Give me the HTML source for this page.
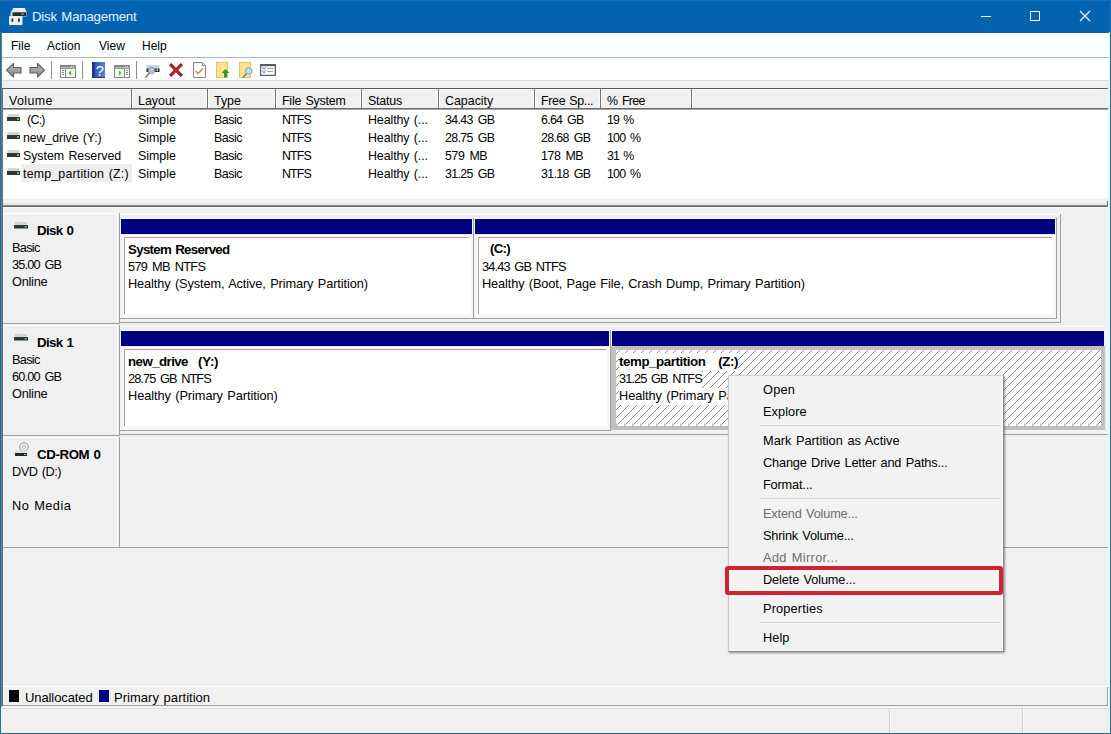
<!DOCTYPE html>
<html><head><meta charset="utf-8">
<style>
*{margin:0;padding:0;box-sizing:border-box}
html,body{width:1111px;height:734px;overflow:hidden;background:#f0f0f0}
body{font-family:"Liberation Sans",sans-serif;font-size:12px;color:#000;position:relative}
.a{position:absolute}
.t{position:absolute;white-space:nowrap}
svg{display:block}
</style></head>
<body>
<div class="a" style="left:0px;top:0px;width:1111px;height:734px;background:#f0f0f0;"></div>
<div class="a" style="left:0px;top:0px;width:1111px;height:32px;background:#0463b1;"></div>
<div class="a" style="left:0px;top:32px;width:1111px;height:1px;background:#1f5d86;"></div>
<div class="a" style="left:0px;top:0px;width:1111px;height:1px;background:#1670bb;"></div>
<div class="a" style="left:1110px;top:0px;width:1px;height:32px;background:#1670bb;"></div>
<svg class="a" style="left:4px;top:4px" width="28" height="26" viewBox="0 0 28 26">
<defs><linearGradient id="tg" x1="0" y1="0" x2="0" y2="1"><stop offset="0" stop-color="#f4f6fa"/><stop offset="1" stop-color="#c9d3dc"/></linearGradient></defs>
<path d="M9.3,4 L20.7,4 L23,9 L23,12.5 L6.5,12.5 L6.5,9 Z" fill="url(#tg)"/>
<rect x="8.5" y="8.3" width="14" height="3.7" fill="#23302a"/>
<rect x="17" y="9.5" width="3" height="1.2" fill="#6fb27a"/>
<rect x="5" y="12" width="13.5" height="9" rx="1" fill="#e9f1f8"/>
<rect x="7.5" y="14.5" width="1.8" height="3.3" fill="#2c3033"/>
<rect x="14" y="14.5" width="1.8" height="3.3" fill="#2c3033"/>
</svg>
<div class="t" style="left:32px;top:9.43px;font-size:13.2px;line-height:16px;letter-spacing:-0.186px;word-spacing:1.0px;color:#e4f4ff;">Disk Management</div>
<div class="a" style="left:981px;top:16px;width:10px;height:1px;background:#fff;"></div>
<div class="a" style="left:1030px;top:11px;width:10px;height:10px;border:1px solid #fff"></div>
<svg class="a" style="left:1079px;top:10px" width="12" height="12" viewBox="0 0 12 12"><path d="M1,1 L11,11 M11,1 L1,11" stroke="#fff" stroke-width="1.1"/></svg>
<div class="a" style="left:0px;top:32px;width:1px;height:702px;background:#2d6e85;"></div>
<div class="a" style="left:1110px;top:32px;width:1px;height:702px;background:#2d6e85;"></div>
<div class="a" style="left:0px;top:733px;width:1111px;height:1px;background:#2d6e85;"></div>
<div class="a" style="left:1px;top:33px;width:1109px;height:24px;background:#fbfeff;"></div>
<div class="a" style="left:1px;top:57px;width:1109px;height:1px;background:#b4b4b4;"></div>
<div class="t" style="left:11px;top:39.34px;font-size:12px;line-height:15px;color:#000;">File</div>
<div class="t" style="left:47px;top:39.34px;font-size:12px;line-height:15px;color:#000;">Action</div>
<div class="t" style="left:99px;top:39.34px;font-size:12px;line-height:15px;color:#000;">View</div>
<div class="t" style="left:142px;top:39.34px;font-size:12px;line-height:15px;color:#000;">Help</div>
<div class="a" style="left:1px;top:58px;width:1109px;height:22px;background:#fff;"></div>
<svg class="a" style="left:5px;top:62px" width="18" height="17" viewBox="0 0 18 17"><defs><linearGradient id="ag" x1="0" y1="0" x2="0" y2="1"><stop offset="0" stop-color="#b8b8b8"/><stop offset="1" stop-color="#8a8a8a"/></linearGradient></defs><path d="M1.5,8.2 L8.5,1.5 L8.5,5.5 L16,5.5 L16,11 L8.5,11 L8.5,15 Z" fill="url(#ag)" stroke="#5e5e5e" stroke-width="1.1" stroke-linejoin="round"/></svg>
<svg class="a" style="left:28px;top:62px" width="18" height="17" viewBox="0 0 18 17"><path d="M16.5,8.2 L9.5,1.5 L9.5,5.5 L2,5.5 L2,11 L9.5,11 L9.5,15 Z" fill="url(#ag)" stroke="#5e5e5e" stroke-width="1.1" stroke-linejoin="round"/></svg>
<div class="a" style="left:51px;top:61px;width:1px;height:18px;background:#8c8c8c;"></div>
<div class="a" style="left:82px;top:61px;width:1px;height:18px;background:#8c8c8c;"></div>
<div class="a" style="left:136px;top:61px;width:1px;height:18px;background:#8c8c8c;"></div>
<svg class="a" style="left:60px;top:65px" width="16" height="13" viewBox="0 0 16 13"><rect x="0.5" y="0.5" width="15" height="12" fill="#fff" stroke="#858585"/><rect x="1" y="1" width="14" height="1.6" fill="#8a8a8a"/><rect x="11" y="1.3" width="1" height="1" fill="#fff"/><rect x="13" y="1.3" width="1" height="1" fill="#fff"/><line x1="1" y1="3.5" x2="15" y2="3.5" stroke="#9a9a9a"/><line x1="5.5" y1="4" x2="5.5" y2="12" stroke="#858585"/><rect x="6" y="4" width="9" height="8" fill="#eef7ea"/><path d="M8.5,8 L11,5.5 L11,10.5 Z" fill="#58a848"/><rect x="2" y="5" width="2" height="1" fill="#858585"/><rect x="2" y="7" width="2" height="1" fill="#858585"/><rect x="2" y="9" width="2" height="1" fill="#858585"/></svg>
<svg class="a" style="left:114px;top:65px" width="16" height="13" viewBox="0 0 16 13"><rect x="0.5" y="0.5" width="15" height="12" fill="#fff" stroke="#858585"/><rect x="1" y="1" width="14" height="1.6" fill="#8a8a8a"/><rect x="11" y="1.3" width="1" height="1" fill="#fff"/><rect x="13" y="1.3" width="1" height="1" fill="#fff"/><line x1="1" y1="3.5" x2="15" y2="3.5" stroke="#9a9a9a"/><line x1="10.5" y1="4" x2="10.5" y2="12" stroke="#858585"/><rect x="1" y="4" width="9" height="8" fill="#eef7ea"/><path d="M7.5,8 L5,5.5 L5,10.5 Z" fill="#58a848"/><rect x="12" y="5" width="2" height="1" fill="#858585"/><rect x="12" y="7" width="2" height="1" fill="#858585"/><rect x="12" y="9" width="2" height="1" fill="#858585"/></svg>
<svg class="a" style="left:92px;top:62px" width="13" height="16" viewBox="0 0 13 16"><defs><linearGradient id="hg" x1="0" y1="0" x2="1" y2="0"><stop offset="0" stop-color="#3050b0"/><stop offset="1" stop-color="#5b7fd0"/></linearGradient></defs><rect x="0" y="0" width="13" height="16" fill="url(#hg)"/><rect x="0" y="0" width="3" height="16" fill="#1f3590"/><rect x="0" y="15" width="13" height="1" fill="#1f3590"/><text x="7.7" y="13.5" font-family="Liberation Sans" font-size="14.5" fill="#fff" text-anchor="middle">?</text></svg>
<svg class="a" style="left:144px;top:64px" width="17" height="15" viewBox="0 0 17 15"><rect x="2.5" y="1" width="13" height="3.5" fill="#cfd5da"/><rect x="2.5" y="4.5" width="13" height="3.5" fill="#1f2d25"/><path d="M11.5,6.2 L14,6.2 M13,5.3 L14,6.2 L13,7.1" stroke="#e0f0e0" stroke-width="0.8" fill="none"/><circle cx="7.5" cy="6.5" r="3.3" fill="#b4c4d2" stroke="#7a8a98" stroke-width="0.7"/><line x1="5.3" y1="9" x2="1.5" y2="13.5" stroke="#6a6a6a" stroke-width="1.3"/></svg>
<svg class="a" style="left:168px;top:62px" width="16" height="16" viewBox="0 0 16 16"><path d="M3.2,3.2 L12.8,12.8 M12.8,3.2 L3.2,12.8" stroke="#941820" stroke-width="3.1" stroke-linecap="square"/><path d="M3.8,3.8 L12.2,12.2 M12.2,3.8 L3.8,12.2" stroke="#c81e2a" stroke-width="1.6"/><circle cx="8" cy="8" r="1.3" fill="#e8202c"/></svg>
<svg class="a" style="left:193px;top:62px" width="14" height="16" viewBox="0 0 14 16"><path d="M0.5,0.5 L9.5,0.5 L12.5,3.5 L12.5,15.5 L0.5,15.5 Z" fill="#fbfdff" stroke="#858585"/><path d="M9.5,0.5 L9.5,3.5 L12.5,3.5" fill="#e6e6e6" stroke="#858585"/><path d="M2.5,9 L5,11.5 L10,6.5" fill="none" stroke="#d87a52" stroke-width="1.4"/></svg>
<svg class="a" style="left:216px;top:62px" width="14" height="16" viewBox="0 0 14 16"><rect x="0.5" y="0.5" width="11" height="15" fill="#fde38f" stroke="#e3c66a"/><path d="M9.5,7 L13.5,11 L11,11 L11,15.5 L8,15.5 L8,11 L5.5,11 Z" fill="#2f9a2a"/></svg>
<svg class="a" style="left:239px;top:62px" width="15" height="16" viewBox="0 0 15 16"><rect x="0.5" y="0.5" width="11" height="15" fill="#fde38f" stroke="#e3c66a"/><circle cx="9.8" cy="9" r="3.3" fill="#bfe0ea" stroke="#8a9aa0" stroke-width="0.9"/><line x1="7.5" y1="11.5" x2="4" y2="15.5" stroke="#6a6a6a" stroke-width="1.2"/></svg>
<svg class="a" style="left:260px;top:64px" width="16" height="12" viewBox="0 0 16 12"><rect x="0.6" y="0.6" width="14.8" height="10.8" fill="#f8fbff" stroke="#5a5a5a" stroke-width="1.2"/><rect x="1" y="1" width="14" height="1.2" fill="#5a5a5a"/><path d="M2.5,3.2 L4,5.5 L5.5,3.2 M2.5,6.5 L4,8.8 L5.5,6.5" fill="none" stroke="#4a7cc0" stroke-width="0.9"/><line x1="7" y1="4.5" x2="13" y2="4.5" stroke="#a8a8a8"/><line x1="7" y1="7.5" x2="13" y2="7.5" stroke="#a8a8a8"/></svg>
<div class="a" style="left:1px;top:80px;width:1109px;height:8px;background:#f0f0f0;"></div>
<div class="a" style="left:1px;top:80px;width:1109px;height:1px;background:#e0e0e0;"></div>
<div class="a" style="left:2px;top:88px;width:1106px;height:1px;background:#5c5c5c;"></div>
<div class="a" style="left:2px;top:88px;width:1px;height:618px;background:#6e6e6e;"></div>
<div class="a" style="left:3px;top:89px;width:1105px;height:110px;background:#fff;"></div>
<div class="a" style="left:3px;top:89px;width:1105px;height:19px;background:#f0f0f0;"></div>
<div class="a" style="left:3px;top:89px;width:1105px;height:1px;background:#fcfcfc;"></div>
<div class="a" style="left:3px;top:108px;width:1105px;height:1px;background:#6a6a6a;"></div>
<div class="a" style="left:3px;top:109px;width:1105px;height:1px;background:#a6a6a6;"></div>
<div class="a" style="left:130px;top:90px;width:1px;height:18px;background:#f8f8f8;"></div>
<div class="a" style="left:131px;top:89px;width:1px;height:19px;background:#747474;"></div>
<div class="a" style="left:132px;top:90px;width:1px;height:18px;background:#fdfdfd;"></div>
<div class="a" style="left:206px;top:90px;width:1px;height:18px;background:#f8f8f8;"></div>
<div class="a" style="left:207px;top:89px;width:1px;height:19px;background:#747474;"></div>
<div class="a" style="left:208px;top:90px;width:1px;height:18px;background:#fdfdfd;"></div>
<div class="a" style="left:274px;top:90px;width:1px;height:18px;background:#f8f8f8;"></div>
<div class="a" style="left:275px;top:89px;width:1px;height:19px;background:#747474;"></div>
<div class="a" style="left:276px;top:90px;width:1px;height:18px;background:#fdfdfd;"></div>
<div class="a" style="left:360px;top:90px;width:1px;height:18px;background:#f8f8f8;"></div>
<div class="a" style="left:361px;top:89px;width:1px;height:19px;background:#747474;"></div>
<div class="a" style="left:362px;top:90px;width:1px;height:18px;background:#fdfdfd;"></div>
<div class="a" style="left:437px;top:90px;width:1px;height:18px;background:#f8f8f8;"></div>
<div class="a" style="left:438px;top:89px;width:1px;height:19px;background:#747474;"></div>
<div class="a" style="left:439px;top:90px;width:1px;height:18px;background:#fdfdfd;"></div>
<div class="a" style="left:533px;top:90px;width:1px;height:18px;background:#f8f8f8;"></div>
<div class="a" style="left:534px;top:89px;width:1px;height:19px;background:#747474;"></div>
<div class="a" style="left:535px;top:90px;width:1px;height:18px;background:#fdfdfd;"></div>
<div class="a" style="left:599px;top:90px;width:1px;height:18px;background:#f8f8f8;"></div>
<div class="a" style="left:600px;top:89px;width:1px;height:19px;background:#747474;"></div>
<div class="a" style="left:601px;top:90px;width:1px;height:18px;background:#fdfdfd;"></div>
<div class="a" style="left:690px;top:90px;width:1px;height:18px;background:#f8f8f8;"></div>
<div class="a" style="left:691px;top:89px;width:1px;height:19px;background:#747474;"></div>
<div class="a" style="left:692px;top:90px;width:1px;height:18px;background:#fdfdfd;"></div>
<div class="t" style="left:9px;top:92.70px;font-size:12.4px;line-height:16px;letter-spacing:0.410px;word-spacing:1.0px;color:#000;">Volume</div>
<div class="t" style="left:138px;top:92.70px;font-size:12.4px;line-height:16px;letter-spacing:0.010px;word-spacing:1.0px;color:#000;">Layout</div>
<div class="t" style="left:214px;top:92.70px;font-size:12.4px;line-height:16px;letter-spacing:0.000px;word-spacing:1.0px;color:#000;">Type</div>
<div class="t" style="left:282px;top:92.70px;font-size:12.4px;line-height:16px;letter-spacing:-0.195px;word-spacing:1.0px;color:#000;">File System</div>
<div class="t" style="left:368px;top:92.70px;font-size:12.4px;line-height:16px;letter-spacing:-0.170px;word-spacing:1.0px;color:#000;">Status</div>
<div class="t" style="left:445px;top:92.70px;font-size:12.4px;line-height:16px;letter-spacing:0.007px;word-spacing:1.0px;color:#000;">Capacity</div>
<div class="t" style="left:541px;top:92.70px;font-size:12.4px;line-height:16px;letter-spacing:-0.317px;word-spacing:1.0px;color:#000;">Free Sp...</div>
<div class="t" style="left:607px;top:92.70px;font-size:12.4px;line-height:16px;letter-spacing:-0.730px;word-spacing:2.0px;color:#000;">% Free</div>
<div class="a" style="left:21px;top:164px;width:111px;height:18px;background:#eeeeee;"></div>
<svg class="a" style="left:7px;top:114px" width="13" height="8" viewBox="0 0 13 8"><rect x="0.5" y="0" width="12" height="3" fill="#d3d7da"/><rect x="0" y="3" width="13" height="4" fill="#2f3633"/><rect x="10" y="4" width="2" height="2" fill="#62c06a"/></svg>
<div class="t" style="left:27px;top:111.70px;font-size:12.4px;line-height:16px;letter-spacing:-0.717px;word-spacing:1.0px;color:#000;">(C:)</div>
<div class="t" style="left:138px;top:111.70px;font-size:12.4px;line-height:16px;letter-spacing:0.000px;word-spacing:1.0px;color:#000;">Simple</div>
<div class="t" style="left:214px;top:111.70px;font-size:12.4px;line-height:16px;letter-spacing:-0.450px;word-spacing:1.0px;color:#000;">Basic</div>
<div class="t" style="left:282px;top:111.70px;font-size:12.4px;line-height:16px;letter-spacing:-0.850px;word-spacing:1.0px;color:#000;">NTFS</div>
<div class="t" style="left:368px;top:111.70px;font-size:12.4px;line-height:16px;letter-spacing:-0.086px;word-spacing:1.0px;color:#000;">Healthy (...</div>
<div class="t" style="left:445px;top:111.70px;font-size:12.4px;line-height:16px;letter-spacing:-0.629px;word-spacing:2.0px;color:#000;">34.43 GB</div>
<div class="t" style="left:541px;top:111.70px;font-size:12.4px;line-height:16px;letter-spacing:-0.700px;word-spacing:2.0px;color:#000;">6.64 GB</div>
<div class="t" style="left:607px;top:111.70px;font-size:12.4px;line-height:16px;letter-spacing:-0.983px;word-spacing:2.0px;color:#000;">19 %</div>
<svg class="a" style="left:7px;top:132px" width="13" height="8" viewBox="0 0 13 8"><rect x="0.5" y="0" width="12" height="3" fill="#d3d7da"/><rect x="0" y="3" width="13" height="4" fill="#2f3633"/><rect x="10" y="4" width="2" height="2" fill="#62c06a"/></svg>
<div class="t" style="left:23px;top:129.70px;font-size:12.4px;line-height:16px;letter-spacing:-0.119px;word-spacing:1.0px;color:#000;">new_drive (Y:)</div>
<div class="t" style="left:138px;top:129.70px;font-size:12.4px;line-height:16px;letter-spacing:0.000px;word-spacing:1.0px;color:#000;">Simple</div>
<div class="t" style="left:214px;top:129.70px;font-size:12.4px;line-height:16px;letter-spacing:-0.450px;word-spacing:1.0px;color:#000;">Basic</div>
<div class="t" style="left:282px;top:129.70px;font-size:12.4px;line-height:16px;letter-spacing:-0.850px;word-spacing:1.0px;color:#000;">NTFS</div>
<div class="t" style="left:368px;top:129.70px;font-size:12.4px;line-height:16px;letter-spacing:-0.086px;word-spacing:1.0px;color:#000;">Healthy (...</div>
<div class="t" style="left:445px;top:129.70px;font-size:12.4px;line-height:16px;letter-spacing:-0.629px;word-spacing:2.0px;color:#000;">28.75 GB</div>
<div class="t" style="left:541px;top:129.70px;font-size:12.4px;line-height:16px;letter-spacing:-0.629px;word-spacing:2.0px;color:#000;">28.68 GB</div>
<div class="t" style="left:607px;top:129.70px;font-size:12.4px;line-height:16px;letter-spacing:-0.787px;word-spacing:2.0px;color:#000;">100 %</div>
<svg class="a" style="left:7px;top:150px" width="13" height="8" viewBox="0 0 13 8"><rect x="0.5" y="0" width="12" height="3" fill="#d3d7da"/><rect x="0" y="3" width="13" height="4" fill="#2f3633"/><rect x="10" y="4" width="2" height="2" fill="#62c06a"/></svg>
<div class="t" style="left:23px;top:147.70px;font-size:12.4px;line-height:16px;letter-spacing:-0.046px;word-spacing:1.0px;color:#000;">System Reserved</div>
<div class="t" style="left:138px;top:147.70px;font-size:12.4px;line-height:16px;letter-spacing:0.000px;word-spacing:1.0px;color:#000;">Simple</div>
<div class="t" style="left:214px;top:147.70px;font-size:12.4px;line-height:16px;letter-spacing:-0.450px;word-spacing:1.0px;color:#000;">Basic</div>
<div class="t" style="left:282px;top:147.70px;font-size:12.4px;line-height:16px;letter-spacing:-0.850px;word-spacing:1.0px;color:#000;">NTFS</div>
<div class="t" style="left:368px;top:147.70px;font-size:12.4px;line-height:16px;letter-spacing:-0.086px;word-spacing:1.0px;color:#000;">Healthy (...</div>
<div class="t" style="left:445px;top:147.70px;font-size:12.4px;line-height:16px;letter-spacing:-0.430px;word-spacing:2.0px;color:#000;">579 MB</div>
<div class="t" style="left:541px;top:147.70px;font-size:12.4px;line-height:16px;letter-spacing:-0.430px;word-spacing:2.0px;color:#000;">178 MB</div>
<div class="t" style="left:607px;top:147.70px;font-size:12.4px;line-height:16px;letter-spacing:-0.983px;word-spacing:2.0px;color:#000;">31 %</div>
<svg class="a" style="left:7px;top:168px" width="13" height="8" viewBox="0 0 13 8"><rect x="0.5" y="0" width="12" height="3" fill="#d3d7da"/><rect x="0" y="3" width="13" height="4" fill="#2f3633"/><rect x="10" y="4" width="2" height="2" fill="#62c06a"/></svg>
<div class="t" style="left:23px;top:165.70px;font-size:12.4px;line-height:16px;letter-spacing:0.183px;word-spacing:1.0px;color:#000;">temp_partition (Z:)</div>
<div class="t" style="left:138px;top:165.70px;font-size:12.4px;line-height:16px;letter-spacing:0.000px;word-spacing:1.0px;color:#000;">Simple</div>
<div class="t" style="left:214px;top:165.70px;font-size:12.4px;line-height:16px;letter-spacing:-0.450px;word-spacing:1.0px;color:#000;">Basic</div>
<div class="t" style="left:282px;top:165.70px;font-size:12.4px;line-height:16px;letter-spacing:-0.850px;word-spacing:1.0px;color:#000;">NTFS</div>
<div class="t" style="left:368px;top:165.70px;font-size:12.4px;line-height:16px;letter-spacing:-0.086px;word-spacing:1.0px;color:#000;">Healthy (...</div>
<div class="t" style="left:445px;top:165.70px;font-size:12.4px;line-height:16px;letter-spacing:-0.629px;word-spacing:2.0px;color:#000;">31.25 GB</div>
<div class="t" style="left:541px;top:165.70px;font-size:12.4px;line-height:16px;letter-spacing:-0.629px;word-spacing:2.0px;color:#000;">31.18 GB</div>
<div class="t" style="left:607px;top:165.70px;font-size:12.4px;line-height:16px;letter-spacing:-0.787px;word-spacing:2.0px;color:#000;">100 %</div>
<div class="a" style="left:3px;top:199px;width:1105px;height:2px;background:#f0f0f0;"></div>
<div class="a" style="left:3px;top:201px;width:1104px;height:1px;background:#fafafa;"></div>
<div class="a" style="left:3px;top:202px;width:1104px;height:3px;background:#ebebeb;"></div>
<div class="a" style="left:3px;top:205px;width:1105px;height:1px;background:#8c8c8c;"></div>
<div class="a" style="left:3px;top:206px;width:1105px;height:1px;background:#666666;"></div>
<div class="a" style="left:3px;top:207px;width:1105px;height:1px;background:#fcfcfc;"></div>
<div class="a" style="left:1107px;top:201px;width:1px;height:6px;background:#6b6b6b;"></div>
<div class="a" style="left:1108px;top:88px;width:2px;height:620px;background:#f4fafc;"></div>
<div class="a" style="left:3px;top:213px;width:114px;height:1px;background:#fff;"></div>
<div class="a" style="left:117px;top:213px;width:1px;height:110px;background:#fff;"></div>
<div class="a" style="left:119px;top:213px;width:1px;height:110px;background:#a0a0a0;"></div>
<div class="a" style="left:3px;top:323px;width:117px;height:1px;background:#a0a0a0;"></div>
<svg class="a" style="left:14px;top:222px" width="14" height="8" viewBox="0 0 14 8"><rect x="1" y="0" width="12" height="3" fill="#d3d7da"/><rect x="0" y="3" width="14" height="3.5" fill="#2f3633"/><rect x="10.5" y="4" width="2" height="1.5" fill="#62c06a"/></svg>
<div class="t" style="left:37px;top:221.89px;font-size:13.3px;line-height:17px;font-weight:bold;letter-spacing:-0.660px;word-spacing:1.0px;color:#000;">Disk 0</div>
<div class="t" style="left:12px;top:239.58px;font-size:12.75px;line-height:16px;letter-spacing:-0.700px;word-spacing:1.0px;color:#000;">Basic</div>
<div class="t" style="left:12px;top:256.58px;font-size:12.75px;line-height:16px;letter-spacing:-0.836px;word-spacing:2.0px;color:#000;">35.00 GB</div>
<div class="t" style="left:12px;top:273.58px;font-size:12.75px;line-height:16px;letter-spacing:-0.250px;word-spacing:1.0px;color:#000;">Online</div>
<div class="a" style="left:120px;top:214px;width:939px;height:1px;background:#fdfdff;"></div>
<div class="a" style="left:121px;top:215px;width:352px;height:103px;background:#f6f6f6;"></div>
<div class="a" style="left:121px;top:215px;width:352px;height:3px;background:#ececf5;"></div>
<div class="a" style="left:121px;top:218px;width:352px;height:1px;background:#fdfdff;"></div>
<div class="a" style="left:121px;top:234px;width:352px;height:1px;background:#e6e6f4;"></div>
<div class="a" style="left:121px;top:235px;width:352px;height:2px;background:#f8f8fc;"></div>
<div class="a" style="left:121px;top:219px;width:351px;height:15px;background:#000080;"></div>
<div class="a" style="left:473px;top:218px;width:1px;height:101px;background:#a0a0a0;"></div>
<div class="a" style="left:124px;top:237px;width:345px;height:1px;background:#a0a0a0;"></div>
<div class="a" style="left:124px;top:237px;width:1px;height:77px;background:#a0a0a0;"></div>
<div class="a" style="left:125px;top:238px;width:345px;height:76px;background:#fff;"></div>
<div class="a" style="left:475px;top:215px;width:581px;height:103px;background:#f6f6f6;"></div>
<div class="a" style="left:475px;top:215px;width:581px;height:3px;background:#ececf5;"></div>
<div class="a" style="left:475px;top:218px;width:581px;height:1px;background:#fdfdff;"></div>
<div class="a" style="left:475px;top:234px;width:581px;height:1px;background:#e6e6f4;"></div>
<div class="a" style="left:475px;top:235px;width:581px;height:2px;background:#f8f8fc;"></div>
<div class="a" style="left:475px;top:219px;width:580px;height:15px;background:#000080;"></div>
<div class="a" style="left:1056px;top:218px;width:1px;height:101px;background:#a0a0a0;"></div>
<div class="a" style="left:478px;top:237px;width:574px;height:1px;background:#a0a0a0;"></div>
<div class="a" style="left:478px;top:237px;width:1px;height:77px;background:#a0a0a0;"></div>
<div class="a" style="left:479px;top:238px;width:574px;height:76px;background:#fff;"></div>
<div class="a" style="left:120px;top:318px;width:937px;height:1px;background:#a0a0a0;"></div>
<div class="a" style="left:1060px;top:214px;width:1px;height:109px;background:#a0a0a0;"></div>
<div class="a" style="left:120px;top:322px;width:941px;height:1px;background:#a0a0a0;"></div>
<div class="t" style="left:128px;top:240.89px;font-size:13.3px;line-height:17px;font-weight:bold;letter-spacing:-0.693px;word-spacing:1.0px;color:#000;">System Reserved</div>
<div class="t" style="left:128px;top:258.58px;font-size:12.75px;line-height:16px;letter-spacing:-0.685px;word-spacing:2.0px;color:#000;">579 MB NTFS</div>
<div class="t" style="left:128px;top:275.58px;font-size:12.75px;line-height:16px;letter-spacing:-0.102px;word-spacing:1.0px;color:#000;">Healthy (System, Active, Primary Partition)</div>
<div class="t" style="left:490px;top:240.39px;font-size:13.3px;line-height:17px;font-weight:bold;letter-spacing:-0.733px;word-spacing:1.0px;color:#000;">(C:)</div>
<div class="t" style="left:482px;top:258.58px;font-size:12.75px;line-height:16px;letter-spacing:-0.850px;word-spacing:2.0px;color:#000;">34.43 GB NTFS</div>
<div class="t" style="left:482px;top:275.58px;font-size:12.75px;line-height:16px;letter-spacing:-0.116px;word-spacing:1.0px;color:#000;">Healthy (Boot, Page File, Crash Dump, Primary Partition)</div>
<div class="a" style="left:3px;top:325px;width:114px;height:1px;background:#fff;"></div>
<div class="a" style="left:117px;top:325px;width:1px;height:110px;background:#fff;"></div>
<div class="a" style="left:119px;top:325px;width:1px;height:110px;background:#a0a0a0;"></div>
<div class="a" style="left:3px;top:435px;width:117px;height:1px;background:#a0a0a0;"></div>
<svg class="a" style="left:14px;top:334px" width="14" height="8" viewBox="0 0 14 8"><rect x="1" y="0" width="12" height="3" fill="#d3d7da"/><rect x="0" y="3" width="14" height="3.5" fill="#2f3633"/><rect x="10.5" y="4" width="2" height="1.5" fill="#62c06a"/></svg>
<div class="t" style="left:37px;top:333.89px;font-size:13.3px;line-height:17px;font-weight:bold;letter-spacing:-0.660px;word-spacing:1.0px;color:#000;">Disk 1</div>
<div class="t" style="left:12px;top:351.58px;font-size:12.75px;line-height:16px;letter-spacing:-0.700px;word-spacing:1.0px;color:#000;">Basic</div>
<div class="t" style="left:12px;top:368.58px;font-size:12.75px;line-height:16px;letter-spacing:-0.836px;word-spacing:2.0px;color:#000;">60.00 GB</div>
<div class="t" style="left:12px;top:385.58px;font-size:12.75px;line-height:16px;letter-spacing:-0.250px;word-spacing:1.0px;color:#000;">Online</div>
<div class="a" style="left:120px;top:326px;width:986px;height:1px;background:#fdfdff;"></div>
<div class="a" style="left:121px;top:327px;width:489px;height:103px;background:#f6f6f6;"></div>
<div class="a" style="left:121px;top:327px;width:489px;height:3px;background:#ececf5;"></div>
<div class="a" style="left:121px;top:330px;width:489px;height:1px;background:#fdfdff;"></div>
<div class="a" style="left:121px;top:346px;width:489px;height:1px;background:#e6e6f4;"></div>
<div class="a" style="left:121px;top:347px;width:489px;height:2px;background:#f8f8fc;"></div>
<div class="a" style="left:121px;top:331px;width:488px;height:15px;background:#000080;"></div>
<div class="a" style="left:610px;top:330px;width:1px;height:101px;background:#a0a0a0;"></div>
<div class="a" style="left:124px;top:349px;width:482px;height:1px;background:#a0a0a0;"></div>
<div class="a" style="left:124px;top:349px;width:1px;height:77px;background:#a0a0a0;"></div>
<div class="a" style="left:125px;top:350px;width:482px;height:76px;background:#fff;"></div>
<div class="a" style="left:611px;top:327px;width:494px;height:3px;background:#ececf5;"></div>
<div class="a" style="left:611px;top:330px;width:494px;height:1px;background:#fdfdff;"></div>
<div class="a" style="left:612px;top:331px;width:492px;height:15px;background:#000080;"></div>
<div class="a" style="left:611px;top:346px;width:494px;height:84px;background:#c0c0c0;"></div>
<svg class="a" style="left:616px;top:350px" width="485" height="76"><defs><pattern id="hp" patternUnits="userSpaceOnUse" width="8" height="8"><rect width="8" height="8" fill="#fff"/><rect x="0" y="3" width="1" height="1" fill="#8c8c8c"/><rect x="1" y="2" width="1" height="1" fill="#8c8c8c"/><rect x="2" y="1" width="1" height="1" fill="#8c8c8c"/><rect x="3" y="0" width="1" height="1" fill="#8c8c8c"/><rect x="4" y="7" width="1" height="1" fill="#8c8c8c"/><rect x="5" y="6" width="1" height="1" fill="#8c8c8c"/><rect x="6" y="5" width="1" height="1" fill="#8c8c8c"/><rect x="7" y="4" width="1" height="1" fill="#8c8c8c"/></pattern></defs><rect width="485" height="76" fill="url(#hp)" shape-rendering="crispEdges"/></svg>
<div class="a" style="left:120px;top:430px;width:491px;height:1px;background:#a0a0a0;"></div>
<div class="a" style="left:120px;top:434px;width:988px;height:1px;background:#a0a0a0;"></div>
<div class="t" style="left:128px;top:352.89px;font-size:13.3px;line-height:17px;font-weight:bold;letter-spacing:-0.569px;word-spacing:1.0px;color:#000;">new_drive</div>
<div class="t" style="left:198px;top:352.89px;font-size:13.3px;line-height:17px;font-weight:bold;letter-spacing:-0.217px;word-spacing:1.0px;color:#000;">(Y:)</div>
<div class="t" style="left:128px;top:370.58px;font-size:12.75px;line-height:16px;letter-spacing:-0.917px;word-spacing:2.0px;color:#000;">28.75 GB NTFS</div>
<div class="t" style="left:128px;top:387.58px;font-size:12.75px;line-height:16px;letter-spacing:-0.065px;word-spacing:1.0px;color:#000;">Healthy (Primary Partition)</div>
<div class="t" style="left:619px;top:352.89px;font-size:13.3px;line-height:17px;font-weight:bold;letter-spacing:-0.417px;word-spacing:1.0px;color:#000;background:#fff;padding-bottom:1px">temp_partition&nbsp;&nbsp;&nbsp;(Z:)</div>
<div class="t" style="left:619px;top:370.58px;font-size:12.75px;line-height:16px;letter-spacing:-0.917px;word-spacing:2.0px;color:#000;background:#fff;padding-bottom:1px">31.25 GB NTFS</div>
<div class="t" style="left:619px;top:387.58px;font-size:12.75px;line-height:16px;letter-spacing:-0.065px;word-spacing:1.0px;color:#000;background:#fff;padding-bottom:1px">Healthy (Primary Partition)</div>
<div class="a" style="left:3px;top:437px;width:114px;height:1px;background:#fff;"></div>
<div class="a" style="left:117px;top:437px;width:1px;height:110px;background:#fff;"></div>
<div class="a" style="left:119px;top:437px;width:1px;height:110px;background:#a0a0a0;"></div>
<div class="a" style="left:3px;top:547px;width:117px;height:1px;background:#a0a0a0;"></div>
<div class="a" style="left:120px;top:438px;width:988px;height:1px;background:#fdfdfd;"></div>
<div class="a" style="left:3px;top:547px;width:1105px;height:1px;background:#a0a0a0;"></div>
<svg class="a" style="left:14px;top:442px" width="15" height="15" viewBox="0 0 15 15"><circle cx="10" cy="5" r="4.3" fill="#eceef0" stroke="#8f9396" stroke-width="0.9"/><circle cx="10" cy="5" r="1.6" fill="#fff" stroke="#a0a4a8" stroke-width="0.7"/><rect x="1" y="8.5" width="12" height="2.5" fill="#dde0e3"/><rect x="1" y="11" width="12" height="3" fill="#1f2a24"/><rect x="10" y="12" width="2" height="1" fill="#9ad0a0"/></svg>
<div class="t" style="left:37px;top:445.89px;font-size:13.3px;line-height:17px;font-weight:bold;letter-spacing:-0.393px;word-spacing:1.0px;color:#000;">CD-ROM 0</div>
<div class="t" style="left:12px;top:463.58px;font-size:12.75px;line-height:16px;letter-spacing:-0.457px;word-spacing:1.0px;color:#000;">DVD (D:)</div>
<div class="t" style="left:12px;top:497.58px;font-size:12.75px;line-height:16px;letter-spacing:0.457px;word-spacing:1.0px;color:#000;">No Media</div>
<div class="a" style="left:3px;top:686px;width:1105px;height:1px;background:#fff;"></div>
<div class="a" style="left:3px;top:705px;width:1105px;height:1px;background:#a0a0a0;"></div>
<div class="a" style="left:1107px;top:687px;width:1px;height:19px;background:#a0a0a0;"></div>
<div class="a" style="left:9px;top:690px;width:10px;height:12px;background:#000;"></div>
<div class="t" style="left:25px;top:689.50px;font-size:13px;line-height:16px;letter-spacing:-0.095px;word-spacing:1.0px;color:#000;">Unallocated</div>
<div class="a" style="left:99px;top:690px;width:10px;height:12px;background:#000080;"></div>
<div class="t" style="left:114px;top:689.50px;font-size:13px;line-height:16px;letter-spacing:0.028px;word-spacing:1.0px;color:#000;">Primary partition</div>
<div class="a" style="left:1px;top:707px;width:1109px;height:1px;background:#fafafa;"></div>
<div class="a" style="left:1px;top:708px;width:1109px;height:1px;background:#d9d9d9;"></div>
<div class="a" style="left:889px;top:709px;width:1px;height:24px;background:#cfcfcf;"></div>
<div class="a" style="left:890px;top:709px;width:1px;height:24px;background:#fafafa;"></div>
<div class="a" style="left:1022px;top:709px;width:1px;height:24px;background:#cfcfcf;"></div>
<div class="a" style="left:1023px;top:709px;width:1px;height:24px;background:#fafafa;"></div>
<div class="a" style="left:1px;top:32px;width:1px;height:675px;background:#4a84a6;"></div>
<div class="a" style="left:1px;top:707px;width:1px;height:26px;background:#e2f3f8;"></div>
<div class="a" style="left:1109px;top:32px;width:1px;height:701px;background:#e2f3f8;"></div>
<div class="a" style="left:728px;top:375px;width:276px;height:277px;background:#f2f2f2;border-left:1px solid #cacaca;border-top:1px solid #d2d2d2;border-right:1px solid #8c8c8c;border-bottom:1px solid #8c8c8c;box-shadow:inset -1px -1px 0 #fbfbfb,1px 1px 2px rgba(0,0,0,0.4)"></div>
<div class="t" style="left:763px;top:381.58px;font-size:12.75px;line-height:16px;letter-spacing:0.233px;word-spacing:1.0px;color:#000;">Open</div>
<div class="t" style="left:763px;top:403.58px;font-size:12.75px;line-height:16px;letter-spacing:0.058px;word-spacing:1.0px;color:#000;">Explore</div>
<div class="t" style="left:763px;top:432.58px;font-size:12.75px;line-height:16px;letter-spacing:0.013px;word-spacing:1.0px;color:#000;">Mark Partition as Active</div>
<div class="t" style="left:763px;top:454.58px;font-size:12.75px;line-height:16px;letter-spacing:-0.158px;word-spacing:1.0px;color:#000;">Change Drive Letter and Paths...</div>
<div class="t" style="left:763px;top:476.58px;font-size:12.75px;line-height:16px;letter-spacing:-0.175px;word-spacing:1.0px;color:#000;">Format...</div>
<div class="t" style="left:763px;top:505.58px;font-size:12.75px;line-height:16px;letter-spacing:-0.173px;word-spacing:1.0px;color:#6d6d6d;">Extend Volume...</div>
<div class="t" style="left:763px;top:527.58px;font-size:12.75px;line-height:16px;letter-spacing:-0.197px;word-spacing:1.0px;color:#000;">Shrink Volume...</div>
<div class="t" style="left:763px;top:549.58px;font-size:12.75px;line-height:16px;letter-spacing:0.371px;word-spacing:1.0px;color:#6d6d6d;">Add Mirror...</div>
<div class="t" style="left:763px;top:571.58px;font-size:12.75px;line-height:16px;letter-spacing:-0.123px;word-spacing:1.0px;color:#000;">Delete Volume...</div>
<div class="t" style="left:763px;top:600.58px;font-size:12.75px;line-height:16px;letter-spacing:0.156px;word-spacing:1.0px;color:#000;">Properties</div>
<div class="t" style="left:763px;top:629.58px;font-size:12.75px;line-height:16px;letter-spacing:0.067px;word-spacing:1.0px;color:#000;">Help</div>
<div class="a" style="left:760px;top:425px;width:240px;height:1px;background:#d7d7d7;"></div>
<div class="a" style="left:760px;top:498px;width:240px;height:1px;background:#d7d7d7;"></div>
<div class="a" style="left:760px;top:622px;width:240px;height:1px;background:#d7d7d7;"></div>
<div class="a" style="left:725px;top:566px;width:278px;height:29px;border:4px solid #cd2431;border-radius:3px"></div>
</body></html>
